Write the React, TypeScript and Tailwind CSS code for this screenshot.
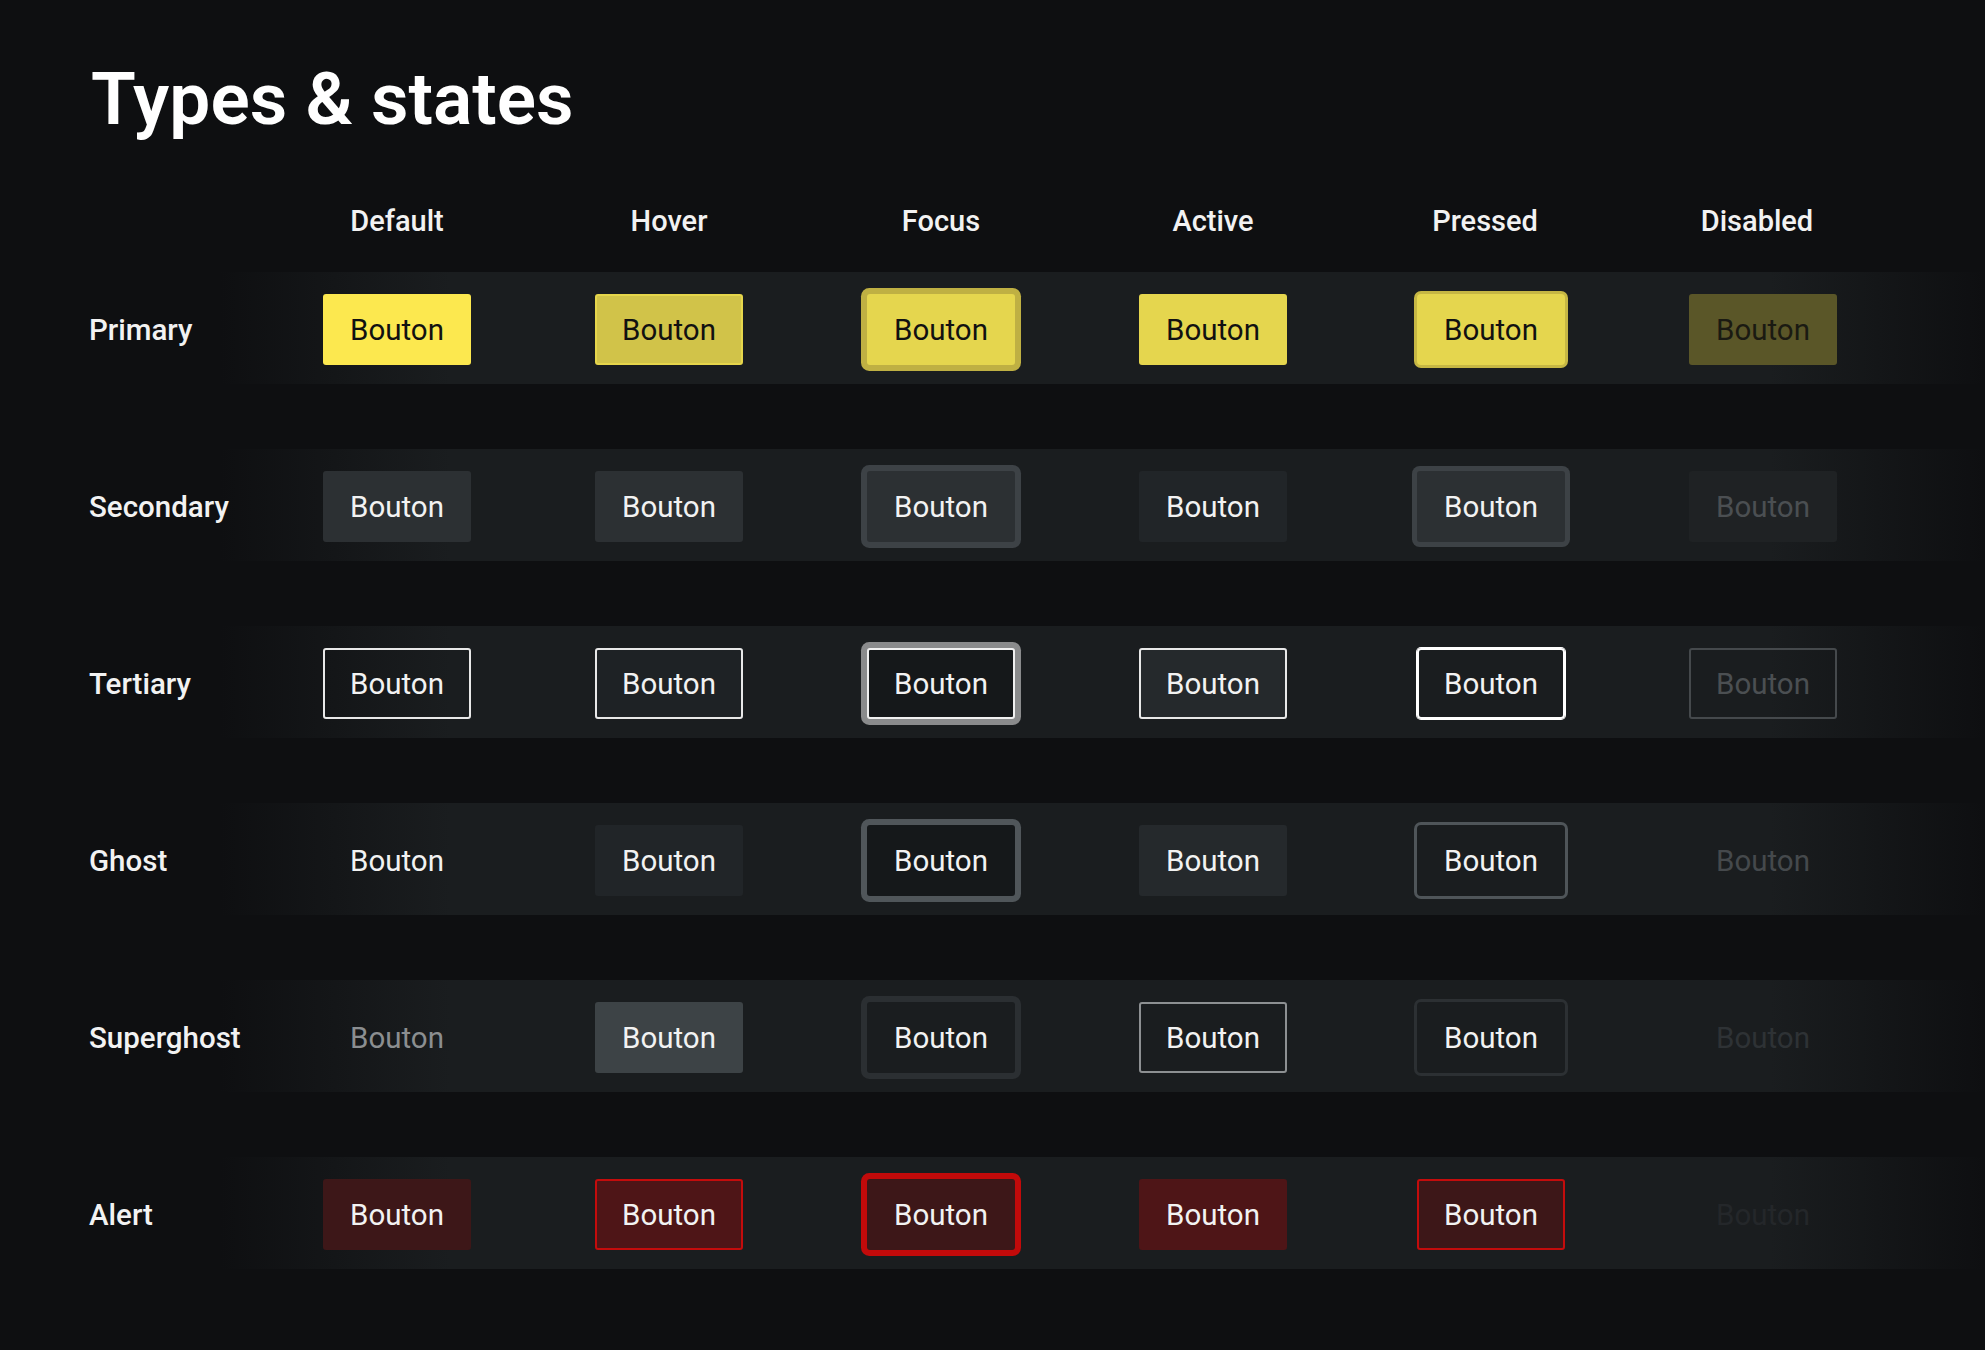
const states = ["Default", "Hover", "Focus", "Active", "Pressed", "Disabled"];

type Row = {
  label: string;
  buttons: string[];
};

// one class string per state, same order as the headers
const rows: Row[] = [
  {
    label: "Primary",
    buttons: [
      "bg-[#fce84f] text-[#111111]",
      "bg-[#d1c349] border-2 border-[#e6d64b] text-[#111111]",
      "bg-[#e5d64e] ring-[6px] ring-[#bfb043] text-[#111111]",
      "bg-[#e5d64e] text-[#111111]",
      "bg-[#e5d64e] ring-[3px] ring-[#c6b744] rounded-[4px] text-[#111111]",
      "bg-[#5a5628] text-[#1a1a12]",
    ],
  },
  {
    label: "Secondary",
    buttons: [
      "bg-[#2c3033] text-[#f2f2f2]",
      "bg-[#2c3033] text-[#f2f2f2]",
      "bg-[#2c3033] ring-[6px] ring-[#3d4246] text-[#f2f2f2]",
      "bg-[#212528] text-[#f2f2f2]",
      "bg-[#2c3033] ring-[5px] ring-[#3d4246] text-[#f2f2f2]",
      "bg-[#1f2224] text-[#4b4f52]",
    ],
  },
  {
    label: "Tertiary",
    buttons: [
      "border-2 border-[#e8e8e8] text-[#f2f2f2]",
      "bg-[#1e2225] border-2 border-[#e8e8e8] text-[#f2f2f2]",
      "bg-[#15181a] border-2 border-[#f0f0f0] ring-[6px] ring-[#8a8b8c] text-[#f2f2f2]",
      "bg-[#25292c] border-2 border-[#e8e8e8] text-[#f2f2f2]",
      "border-2 border-[#ffffff] ring-[1px] ring-[#ffffff] rounded-[4px] text-[#f2f2f2]",
      "border-2 border-[#45494c] text-[#4b4f52]",
    ],
  },
  {
    label: "Ghost",
    buttons: [
      "text-[#f2f2f2]",
      "bg-[#212528] text-[#f2f2f2]",
      "bg-[#15181a] ring-[6px] ring-[#50565a] text-[#f2f2f2]",
      "bg-[#25292c] text-[#f2f2f2]",
      "ring-[3px] ring-[#4f5559] rounded-[4px] text-[#f2f2f2]",
      "text-[#45494c]",
    ],
  },
  {
    label: "Superghost",
    buttons: [
      "text-[#8b8e90]",
      "bg-[#3d4346] text-[#f2f2f2]",
      "ring-[6px] ring-[#2b2f32] text-[#f2f2f2]",
      "border-2 border-[#8d9092] text-[#f2f2f2]",
      "ring-[3px] ring-[#2c3033] rounded-[4px] text-[#f2f2f2]",
      "text-[#2e3235]",
    ],
  },
  {
    label: "Alert",
    buttons: [
      "bg-[#3d1718] text-[#f2f2f2]",
      "bg-[#4e1517] border-2 border-[#c40c0c] text-[#f2f2f2]",
      "bg-[#3d1718] ring-[6px] ring-[#c20a0a] text-[#f2f2f2]",
      "bg-[#4e1517] text-[#f2f2f2]",
      "bg-[#3d1718] border-2 border-[#c40c0c] text-[#f2f2f2]",
      "text-[#24272a]",
    ],
  },
];

function Bouton({ className, shifted }: { className: string; shifted: boolean }) {
  return (
    <div
      className={`flex h-[71px] w-[148px] items-center justify-center rounded-[3px] pt-[2px] text-[29.5px] leading-none ${
        shifted ? "ml-[12px]" : ""
      } ${className}`}
    >
      Bouton
    </div>
  );
}

export default function App() {
  return (
    <div
      className="min-h-[1350px] w-full bg-[#0e0f11] pt-[63px] text-[#f2f2f2]"
      style={{ fontFamily: "Roboto, 'Liberation Sans', sans-serif" }}
    >
      <h1 className="pl-[91px] text-[73px] font-semibold leading-[72px] text-white">Types &amp; states</h1>

      <div className="mt-[57px] flex h-[56px] items-center pt-[3px]">
        <div className="w-[261px] shrink-0" />
        {states.map((s) => (
          <div key={s} className="flex w-[272px] shrink-0 justify-center text-[29px] font-medium">
            {s}
          </div>
        ))}
      </div>

      <div className="mt-[24px] flex flex-col gap-[65px]">
        {rows.map((row) => (
          <div
            key={row.label}
            className="flex h-[112px] w-full bg-[linear-gradient(90deg,transparent_220px,#1a1d1f_450px,#1a1d1f_1770px,transparent_1985px)]"
          >
            <div className="flex w-[261px] shrink-0 items-center pl-[89px] pt-[4px] text-[29.5px] font-medium">
              {row.label}
            </div>
            {row.buttons.map((cls, i) => (
              <div key={i} className="flex w-[272px] shrink-0 justify-center pt-[22px]">
                <Bouton className={cls} shifted={i >= 4} />
              </div>
            ))}
          </div>
        ))}
      </div>
    </div>
  );
}
